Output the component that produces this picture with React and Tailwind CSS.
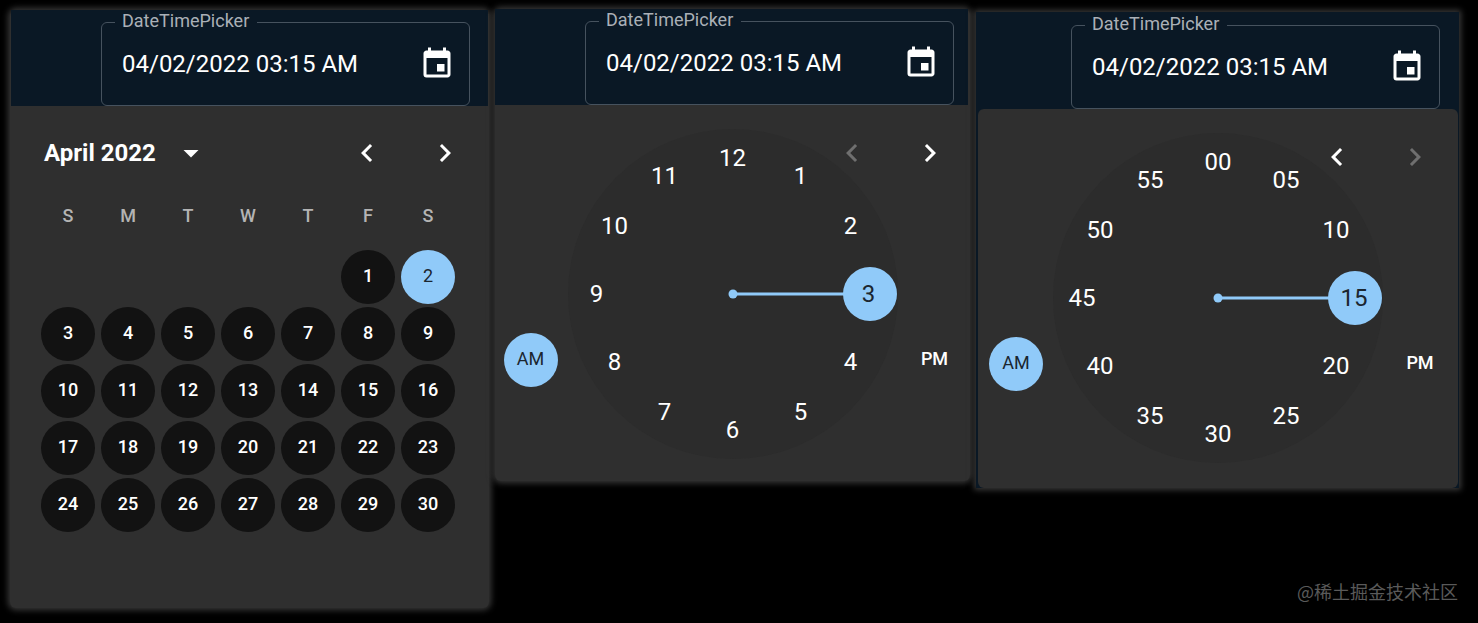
import React, { useState } from 'react';
import { MdArrowDropDown, MdChevronLeft, MdChevronRight, MdEvent } from 'react-icons/md';

const WEEKDAYS = ['S', 'M', 'T', 'W', 'T', 'F', 'S'];
const HOURS = ['12', '1', '2', '3', '4', '5', '6', '7', '8', '9', '10', '11'];
const MINUTES = ['00', '05', '10', '15', '20', '25', '30', '35', '40', '45', '50', '55'];

// April 2022 starts on a Friday
const FIRST_WEEKDAY = 5;
const DAYS_IN_MONTH = 30;

const getWeeks = () => {
  const cells = [
    ...Array(FIRST_WEEKDAY).fill(null),
    ...Array.from({ length: DAYS_IN_MONTH }, (_, i) => i + 1),
  ];
  const weeks = [];
  for (let i = 0; i < cells.length; i += 7) {
    weeks.push(cells.slice(i, i + 7));
  }
  return weeks;
};

const DateField = ({ id }) => {
  const [value, setValue] = useState('04/02/2022 03:15 AM');

  return (
    <fieldset className="min-w-0 rounded-md border border-[#46525e] pl-[13px]">
      <legend className="pb-0.5 pl-[7px] pr-2 text-lg leading-[22px] text-[#aab0b7]">
        <label htmlFor={id} className="block">DateTimePicker</label>
      </legend>
      <div className="flex h-[71px] items-center pb-[11px] pl-[7px] pr-[14px]">
        <input
          id={id}
          type="text"
          value={value}
          onChange={(e) => setValue(e.target.value)}
          className="w-0 flex-1 bg-transparent text-2xl text-white outline-none"
        />
        <button type="button" aria-label="Choose date" className="text-white">
          <MdEvent size={36} />
        </button>
      </div>
    </fieldset>
  );
};

const ArrowButtons = ({ prevDisabled = false, nextDisabled = false }) => (
  <div className="flex gap-[42px]">
    <button type="button" aria-label="Previous" disabled={prevDisabled} className="text-white disabled:text-[#6f6f6f]">
      <MdChevronLeft size={36} />
    </button>
    <button type="button" aria-label="Next" disabled={nextDisabled} className="text-white disabled:text-[#6f6f6f]">
      <MdChevronRight size={36} />
    </button>
  </div>
);

const Calendar = () => {
  const [selected, setSelected] = useState(2);

  return (
    <div className="pb-[75px] pl-7 pr-[26px] pt-[29px]">
      <div className="mb-[17px] flex items-center justify-between pl-1.5">
        <button type="button" className="flex items-center gap-[17px] text-2xl font-bold text-white">
          April 2022
          <MdArrowDropDown size={36} />
        </button>
        <ArrowButtons />
      </div>
      <table className="w-full max-w-[420px] table-fixed text-center text-lg">
        <thead>
          <tr className="h-[60px]">
            {WEEKDAYS.map((day, i) => (
              <th key={i} scope="col" className="p-0 pb-1 font-medium text-[#b4b4b4]">{day}</th>
            ))}
          </tr>
        </thead>
        <tbody>
          {getWeeks().map((week, i) => (
            <tr key={i} className="h-[57px]">
              {week.map((day, j) => (
                <td key={j} className="p-0">
                  {day && (
                    <button
                      type="button"
                      onClick={() => setSelected(day)}
                      className={`mx-auto flex size-[54px] items-center justify-center rounded-full pb-0.5 ${
                        day === selected ? 'bg-[#90caf9] text-[#1b2630]' : 'bg-[#121212] font-medium text-white'
                      }`}
                    >
                      {day}
                    </button>
                  )}
                </td>
              ))}
            </tr>
          ))}
        </tbody>
      </table>
    </div>
  );
};

const MeridiemButton = ({ label, active, onClick }) => (
  <button
    type="button"
    onClick={onClick}
    className={`mb-[72px] flex size-[54px] items-center justify-center rounded-full pb-0.5 text-lg ${
      active ? 'bg-[#90caf9] text-[#1b2630]' : 'font-medium text-white'
    }`}
  >
    {label}
  </button>
);

const Clock = ({ numbers, initial, prevDisabled, nextDisabled }) => {
  const [selected, setSelected] = useState(initial);
  const [meridiem, setMeridiem] = useState('AM');
  const selectedAngle = numbers.indexOf(selected) * 30;

  return (
    <div className="flex justify-center pb-[22px] pt-6">
      <div className="relative flex items-end gap-[10px]">
        <MeridiemButton label="AM" active={meridiem === 'AM'} onClick={() => setMeridiem('AM')} />
        <div className="relative size-[330px] rounded-full bg-[#2c2c2c]">
          <svg viewBox="0 0 330 330" className="size-full text-[#90caf9]" fill="currentColor">
            <g transform={`rotate(${selectedAngle} 165 165)`}>
              <rect x="163.5" y="40" width="3" height="125" />
              <circle cx="165" cy="28" r="27" />
            </g>
            <circle cx="165" cy="165" r="4.5" />
          </svg>
          {numbers.map((number, i) => {
            const angle = (i * Math.PI) / 6;
            return (
              <button
                key={number}
                type="button"
                onClick={() => setSelected(number)}
                className={`absolute flex size-[54px] -translate-x-1/2 -translate-y-1/2 items-center justify-center rounded-full text-2xl ${
                  number === selected ? 'text-[#1b2630]' : 'text-white'
                }`}
                style={{
                  left: Math.round(165 + 136 * Math.sin(angle)),
                  top: Math.round(165 - 136 * Math.cos(angle)),
                }}
              >
                {number}
              </button>
            );
          })}
        </div>
        <MeridiemButton label="PM" active={meridiem === 'PM'} onClick={() => setMeridiem('PM')} />
        <div className="absolute right-[14px] top-1.5">
          <ArrowButtons prevDisabled={prevDisabled} nextDisabled={nextDisabled} />
        </div>
      </div>
    </div>
  );
};

const App = () => {
  return (
    <div className="relative min-h-screen bg-black font-['Roboto',sans-serif]">
      <main className="grid grid-cols-[479fr_475fr_483fr] items-start gap-[6px] pb-[14px] pl-2.5 pr-[19px] pt-[9px]">
        <section className="mt-px rounded-md bg-[#2f2f2f] shadow-[0_0_6px_2px_#3a3a3a]">
          <div className="mx-px bg-[#0a1825] pl-[90px] pr-[18px]">
            <DateField id="date-field" />
          </div>
          <Calendar />
        </section>

        <section className="rounded-md bg-[#2f2f2f] shadow-[0_0_6px_2px_#3a3a3a]">
          <div className="mr-0.5 bg-[#0a1825] pl-[90px] pr-[14px]">
            <DateField id="hours-field" />
          </div>
          <Clock numbers={HOURS} initial="3" prevDisabled />
        </section>

        <section className="mt-[3px] bg-[#0a1825] shadow-[0_0_6px_2px_#3a3a3a]">
          <div className="pl-[95px] pr-[19px] pt-px">
            <DateField id="minutes-field" />
          </div>
          <div className="ml-0.5 mr-px rounded-md bg-[#2f2f2f] pb-[3px]">
            <Clock numbers={MINUTES} initial="15" nextDisabled />
          </div>
        </section>
      </main>

      <p className="absolute bottom-5 right-5 font-['Noto_Sans_CJK_SC',sans-serif] text-lg leading-6 text-[#5a5a5a]">
        @稀土掘金技术社区
      </p>
    </div>
  );
};

export default App;
